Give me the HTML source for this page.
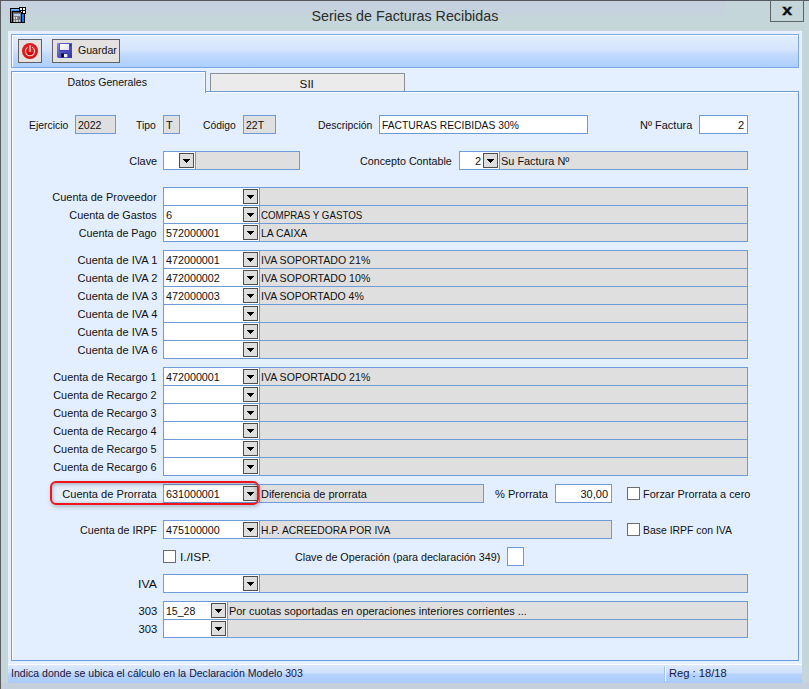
<!DOCTYPE html>
<html lang="es"><head><meta charset="utf-8"><title>Series de Facturas Recibidas</title>
<style>
html,body{margin:0;padding:0}
body{width:809px;height:689px;overflow:hidden;position:relative;background:#c4d5da;font-family:"Liberation Sans",sans-serif;font-size:11px;color:#101010}
div{box-sizing:border-box;position:absolute}
.t{white-space:nowrap;display:inline-block;transform-origin:0 0}
.r .t{transform-origin:100% 0}
.c .t{transform-origin:50% 0}
.frame{left:0;top:0;width:809px;height:689px;border-left:1px solid #5a5d62;border-top:1px solid #55585e;background:#c4d6d9}
.tbl{left:1px;top:1px;width:724px;height:17px;background:linear-gradient(#c6d0df 0,#c5d2dd 12px,#c4d6d9 17px)}
.title{left:0;top:0;width:809px;height:30px;line-height:31px;text-align:center;font-size:15px;color:#2b2b2b}
.close{left:770px;top:0;width:34px;height:22px;border:1px solid #5e6265;text-align:center;font-weight:bold;font-size:15px;line-height:17px;color:#0c0c0c;-webkit-text-stroke:0.4px #0c0c0c}
.close span{display:inline-block;transform:scaleX(1.18)}
.client{left:8px;top:30px;width:794px;height:653px;background:#e4efff;border-top:1px solid #d0d4d8}
.tool{left:11px;top:34px;width:788px;height:34px;border:1px solid #7da7e0;box-shadow:inset 1px 1px 0 #fff;background:linear-gradient(#e3eefe 0,#d5e5fd 46%,#c3dbfc 58%,#adcefb 100%)}
.btn{top:39px;height:24px;border:1px solid #626060;background:#e4e2e1}
.tabs{left:11px;top:91px;width:788px;height:570px;border:1px solid #6e9bd8;box-shadow:inset 1px 1px 0 #fff;background:#e3efff}
.tab1{left:11px;top:71px;width:195px;height:22px;border:1px solid #6e9bd8;border-bottom:none;box-shadow:inset 1px 1px 0 #fff,inset -1px 0 0 #f4f8fe;background:#e3efff;text-align:center;line-height:20px;padding-right:3px}
.tab2{left:210px;top:73px;width:195px;height:18px;border:1px solid #8b9097;border-bottom:none;background:#ebebeb;text-align:center;line-height:21px;padding-right:2px}
.status{left:8px;top:664px;width:794px;height:19px;border-top:1px solid #fbfdff;background:linear-gradient(#dde9fd 0,#cde0fc 8px,#b7d3fb 9px,#a9cbfa 100%);color:#15153c;line-height:17px}
.sep{left:656px;top:1px;width:2px;height:15px;border-left:1px solid #a3c3ef;background:#fff}
.bot{left:1px;top:683px;width:808px;height:6px;background:#c5d0dc}
.lb{height:19px;line-height:19px;white-space:nowrap}
.lb.r{text-align:right}
.bx{border:1px solid #6e9bd8;line-height:19px;padding-left:2px;white-space:nowrap;overflow:hidden}
.bx.in{background:#fff}
.bx.ro{background:#dfdfdf;padding-left:1px}
.bx.num{text-align:right;padding-right:3px;padding-left:0}
.n2{position:absolute;font-weight:normal;right:18px;top:0}
.dd{width:15px;height:15px;border:1px solid #4e4e4e;background:#dedede}
.dd i{position:absolute;left:3px;top:5px;width:7px;height:4px;background:linear-gradient(#000,#000) 0 0/7px 1px no-repeat,linear-gradient(#000,#000) 1px 1px/5px 1px no-repeat,linear-gradient(#000,#000) 2px 2px/3px 1px no-repeat,linear-gradient(#000,#000) 3px 3px/1px 1px no-repeat}
.ck{width:13px;height:13px;border:1px solid #6c6c6c;background:#fff}
.hl{border:2px solid #f0141c;border-radius:6px;box-shadow:inset 0 1px 4px rgba(0,0,0,.32),1px 2px 4px rgba(0,0,0,.22)}
</style></head><body>
<div class="frame"></div>
<div class="tbl"></div>
<svg style="position:absolute;left:10px;top:7px" width="16" height="16" viewBox="0 0 16 16" shape-rendering="crispEdges">
<rect x="0" y="1" width="15" height="15" fill="#000"/>
<rect x="9" y="0" width="7" height="7" fill="#000"/>
<rect x="1" y="2" width="8" height="2" fill="#7db8f5"/>
<rect x="1" y="3" width="8" height="1" fill="#3f95f0"/>
<rect x="1" y="4" width="1" height="11" fill="#1c82f4"/>
<rect x="12" y="7" width="2" height="8" fill="#0a7cff"/>
<rect x="2" y="4" width="1" height="11" fill="#000"/>
<rect x="3" y="5" width="8" height="10" fill="#7c7f86"/>
<rect x="3" y="5" width="8" height="1" fill="#4a4c52"/>
<rect x="4" y="7" width="6" height="2" fill="#b5d3ee"/>
<rect x="4" y="10" width="1" height="2" fill="#e4e4e4"/><rect x="6" y="10" width="1" height="2" fill="#e4e4e4"/><rect x="9" y="10" width="1" height="2" fill="#e23030"/>
<rect x="4" y="13" width="1" height="2" fill="#d0d0d0"/><rect x="6" y="13" width="2" height="2" fill="#d0d0d0"/><rect x="9" y="13" width="1" height="2" fill="#c8c8c8"/>
<rect x="10" y="1" width="2" height="2" fill="#fff"/><rect x="13" y="1" width="2" height="2" fill="#fff"/>
<rect x="11" y="4" width="1" height="1" fill="#fff"/><rect x="13" y="4" width="2" height="2" fill="#fff"/>
</svg>
<div class="title c"><span class="t" style="transform:scaleX(0.9534)">Series de Facturas Recibidas</span></div>
<div class="close"><span>x</span></div>
<div class="client"></div>
<div class="tool"></div>
<div class="btn" style="left:18px;width:24px"><svg style="position:absolute;left:3px;top:3px" width="16" height="16" viewBox="0 0 16 16">
<defs><radialGradient id="pg" cx="0.5" cy="0.45" r="0.55"><stop offset="0" stop-color="#e62020"/><stop offset="0.7" stop-color="#df1c1c"/><stop offset="1" stop-color="#c41616"/></radialGradient></defs>
<circle cx="8" cy="8" r="8" fill="url(#pg)"/>
<path d="M4 9.2 A4 4 0 0 0 12 9.2 Z" fill="#cc0808"/>
<path d="M6 4.1 A4.6 4.6 0 1 0 10 4.1" fill="none" stroke="#f7d4d4" stroke-width="1.05"/>
<rect x="7.2" y="2.2" width="1.6" height="6.8" fill="#e9c0c0"/>
</svg></div>
<div class="btn" style="left:52px;width:68px"><svg style="position:absolute;left:4px;top:3px" width="15" height="15" viewBox="0 0 15 15">
<defs><linearGradient id="fg" x1="0" y1="0" x2="1" y2="1"><stop offset="0" stop-color="#8a8ae6"/><stop offset="0.5" stop-color="#5555c8"/><stop offset="1" stop-color="#3232a0"/></linearGradient>
<linearGradient id="fl" x1="0" y1="0" x2="1" y2="1"><stop offset="0" stop-color="#fff"/><stop offset="1" stop-color="#dfe2f2"/></linearGradient></defs>
<path d="M0 0H15V15H1.2L0 13.8Z" fill="url(#fg)"/>
<rect x="2.5" y="0.5" width="10" height="8" fill="#4444b8"/>
<rect x="3" y="1" width="9" height="6" fill="url(#fl)"/>
<rect x="13" y="1.6" width="1.2" height="1.6" fill="#1c1c70"/>
<rect x="4" y="10.2" width="7" height="4.2" fill="#2c2c78"/>
<rect x="4.4" y="10.6" width="2.4" height="3.6" fill="#0c0c1c"/>
<rect x="7" y="11" width="3.4" height="3.2" fill="#eeeef6"/>
</svg><div style="left:25px;top:-1px;line-height:22px"><span class="t" style="transform:scaleX(0.9614)">Guardar</span></div></div>
<div class="tabs"></div>
<div class="tab1 c"><span class="t" style="transform:scaleX(0.9607)">Datos Generales</span></div>
<div class="tab2 c"><span class="t" style="transform:scaleX(1.0630)">SII</span></div>
<div class="lb r" style="left:-43px;top:188px;width:200px"><span class="t" style="transform:scaleX(0.9973)">Cuenta de Proveedor</span></div>
<div class="bx in" style="left:163px;top:187px;width:97px;height:19px;"></div>
<div class="dd" style="left:243px;top:189px"><i></i></div>
<div class="bx ro" style="left:259px;top:187px;width:489px;height:19px;"></div>
<div class="lb r" style="left:-43px;top:206px;width:200px"><span class="t" style="transform:scaleX(0.9845)">Cuenta de Gastos</span></div>
<div class="bx in" style="left:163px;top:205px;width:97px;height:19px;"><span class="t">6</span></div>
<div class="dd" style="left:243px;top:207px"><i></i></div>
<div class="bx ro" style="left:259px;top:205px;width:489px;height:19px;"><span class="t" style="transform:scaleX(0.8860)">COMPRAS Y GASTOS</span></div>
<div class="lb r" style="left:-43px;top:224px;width:200px"><span class="t" style="transform:scaleX(0.9784)">Cuenta de Pago</span></div>
<div class="bx in" style="left:163px;top:223px;width:97px;height:19px;"><span class="t" style="transform:scaleX(0.9771)">572000001</span></div>
<div class="dd" style="left:243px;top:225px"><i></i></div>
<div class="bx ro" style="left:259px;top:223px;width:489px;height:19px;"><span class="t" style="transform:scaleX(0.9464)">LA CAIXA</span></div>
<div class="lb r" style="left:-43px;top:251px;width:200px"><span class="t" style="transform:scaleX(1.0061)">Cuenta de IVA 1</span></div>
<div class="bx in" style="left:163px;top:250px;width:97px;height:19px;"><span class="t" style="transform:scaleX(0.9771)">472000001</span></div>
<div class="dd" style="left:243px;top:252px"><i></i></div>
<div class="bx ro" style="left:259px;top:250px;width:489px;height:19px;"><span class="t" style="transform:scaleX(0.9611)">IVA SOPORTADO 21%</span></div>
<div class="lb r" style="left:-43px;top:269px;width:200px"><span class="t" style="transform:scaleX(1.0061)">Cuenta de IVA 2</span></div>
<div class="bx in" style="left:163px;top:268px;width:97px;height:19px;"><span class="t" style="transform:scaleX(0.9771)">472000002</span></div>
<div class="dd" style="left:243px;top:270px"><i></i></div>
<div class="bx ro" style="left:259px;top:268px;width:489px;height:19px;"><span class="t" style="transform:scaleX(0.9611)">IVA SOPORTADO 10%</span></div>
<div class="lb r" style="left:-43px;top:287px;width:200px"><span class="t" style="transform:scaleX(1.0061)">Cuenta de IVA 3</span></div>
<div class="bx in" style="left:163px;top:286px;width:97px;height:19px;"><span class="t" style="transform:scaleX(0.9771)">472000003</span></div>
<div class="dd" style="left:243px;top:288px"><i></i></div>
<div class="bx ro" style="left:259px;top:286px;width:489px;height:19px;"><span class="t" style="transform:scaleX(0.9554)">IVA SOPORTADO 4%</span></div>
<div class="lb r" style="left:-43px;top:305px;width:200px"><span class="t" style="transform:scaleX(1.0061)">Cuenta de IVA 4</span></div>
<div class="bx in" style="left:163px;top:304px;width:97px;height:19px;"></div>
<div class="dd" style="left:243px;top:306px"><i></i></div>
<div class="bx ro" style="left:259px;top:304px;width:489px;height:19px;"></div>
<div class="lb r" style="left:-43px;top:323px;width:200px"><span class="t" style="transform:scaleX(1.0061)">Cuenta de IVA 5</span></div>
<div class="bx in" style="left:163px;top:322px;width:97px;height:19px;"></div>
<div class="dd" style="left:243px;top:324px"><i></i></div>
<div class="bx ro" style="left:259px;top:322px;width:489px;height:19px;"></div>
<div class="lb r" style="left:-43px;top:341px;width:200px"><span class="t" style="transform:scaleX(1.0061)">Cuenta de IVA 6</span></div>
<div class="bx in" style="left:163px;top:340px;width:97px;height:19px;"></div>
<div class="dd" style="left:243px;top:342px"><i></i></div>
<div class="bx ro" style="left:259px;top:340px;width:489px;height:19px;"></div>
<div class="lb r" style="left:-43px;top:368px;width:200px"><span class="t" style="transform:scaleX(0.9878)">Cuenta de Recargo 1</span></div>
<div class="bx in" style="left:163px;top:367px;width:97px;height:19px;"><span class="t" style="transform:scaleX(0.9771)">472000001</span></div>
<div class="dd" style="left:243px;top:369px"><i></i></div>
<div class="bx ro" style="left:259px;top:367px;width:489px;height:19px;"><span class="t" style="transform:scaleX(0.9611)">IVA SOPORTADO 21%</span></div>
<div class="lb r" style="left:-43px;top:386px;width:200px"><span class="t" style="transform:scaleX(0.9878)">Cuenta de Recargo 2</span></div>
<div class="bx in" style="left:163px;top:385px;width:97px;height:19px;"></div>
<div class="dd" style="left:243px;top:387px"><i></i></div>
<div class="bx ro" style="left:259px;top:385px;width:489px;height:19px;"></div>
<div class="lb r" style="left:-43px;top:404px;width:200px"><span class="t" style="transform:scaleX(0.9878)">Cuenta de Recargo 3</span></div>
<div class="bx in" style="left:163px;top:403px;width:97px;height:19px;"></div>
<div class="dd" style="left:243px;top:405px"><i></i></div>
<div class="bx ro" style="left:259px;top:403px;width:489px;height:19px;"></div>
<div class="lb r" style="left:-43px;top:422px;width:200px"><span class="t" style="transform:scaleX(0.9878)">Cuenta de Recargo 4</span></div>
<div class="bx in" style="left:163px;top:421px;width:97px;height:19px;"></div>
<div class="dd" style="left:243px;top:423px"><i></i></div>
<div class="bx ro" style="left:259px;top:421px;width:489px;height:19px;"></div>
<div class="lb r" style="left:-43px;top:440px;width:200px"><span class="t" style="transform:scaleX(0.9878)">Cuenta de Recargo 5</span></div>
<div class="bx in" style="left:163px;top:439px;width:97px;height:19px;"></div>
<div class="dd" style="left:243px;top:441px"><i></i></div>
<div class="bx ro" style="left:259px;top:439px;width:489px;height:19px;"></div>
<div class="lb r" style="left:-43px;top:458px;width:200px"><span class="t" style="transform:scaleX(0.9878)">Cuenta de Recargo 6</span></div>
<div class="bx in" style="left:163px;top:457px;width:97px;height:19px;"></div>
<div class="dd" style="left:243px;top:459px"><i></i></div>
<div class="bx ro" style="left:259px;top:457px;width:489px;height:19px;"></div>
<div class="lb" style="left:29px;top:116px"><span class="t" style="transform:scaleX(0.9452)">Ejercicio</span></div>
<div class="bx ro" style="left:75px;top:115px;width:41px;height:19px;padding-left:2px"><span class="t" style="transform:scaleX(0.9598)">2022</span></div>
<div class="lb" style="left:136px;top:116px"><span class="t" style="transform:scaleX(0.9429)">Tipo</span></div>
<div class="bx ro" style="left:163px;top:115px;width:17px;height:19px;padding-left:2px"><span class="t">T</span></div>
<div class="lb" style="left:203px;top:116px"><span class="t" style="transform:scaleX(0.9409)">Código</span></div>
<div class="bx ro" style="left:243px;top:115px;width:33px;height:19px;padding-left:2px"><span class="t" style="transform:scaleX(0.9542)">22T</span></div>
<div class="lb" style="left:318px;top:116px"><span class="t" style="transform:scaleX(0.9466)">Descripción</span></div>
<div class="bx in" style="left:379px;top:115px;width:209px;height:19px;"><span class="t" style="transform:scaleX(0.9364)">FACTURAS RECIBIDAS 30%</span></div>
<div class="lb" style="left:640px;top:116px"><span class="t" style="transform:scaleX(0.9998)">Nº Factura</span></div>
<div class="bx in num" style="left:699px;top:115px;width:49px;height:19px;"><span class="t">2</span></div>
<div class="lb r" style="left:-43px;top:152px;width:200px"><span class="t" style="transform:scaleX(0.9884)">Clave</span></div>
<div class="bx ro" style="left:163px;top:151px;width:137px;height:19px;"></div>
<div class="bx in" style="left:163px;top:151px;width:33px;height:19px;"></div>
<div class="dd" style="left:179px;top:153px"><i></i></div>
<div class="lb" style="left:360px;top:152px"><span class="t" style="transform:scaleX(0.9747)">Concepto Contable</span></div>
<div class="bx ro" style="left:459px;top:151px;width:289px;height:19px;"></div>
<div class="bx in" style="left:459px;top:151px;width:41px;height:19px;"><span class="t"><b class="n2">2</b></span></div>
<div class="dd" style="left:483px;top:153px"><i></i></div>
<div class="lb" style="left:501px;top:152px"><span class="t" style="transform:scaleX(0.9923)">Su Factura Nº</span></div>
<div class="lb r" style="left:-43px;top:485px;width:200px"><span class="t" style="transform:scaleX(1.0079)">Cuenta de Prorrata</span></div>
<div class="bx in" style="left:163px;top:484px;width:97px;height:19px;"><span class="t" style="transform:scaleX(0.9771)">631000001</span></div>
<div class="dd" style="left:243px;top:486px"><i></i></div>
<div class="bx ro" style="left:259px;top:484px;width:225px;height:19px;"><span class="t" style="transform:scaleX(0.9944)">Diferencia de prorrata</span></div>
<div class="lb" style="left:495px;top:485px"><span class="t" style="transform:scaleX(1.0080)">% Prorrata</span></div>
<div class="bx in num" style="left:555px;top:484px;width:57px;height:19px;"><span class="t">30,00</span></div>
<div class="ck" style="left:627px;top:487px"></div>
<div class="lb" style="left:643px;top:485px"><span class="t" style="transform:scaleX(0.9926)">Forzar Prorrata a cero</span></div>
<div class="hl" style="left:50px;top:481px;width:209px;height:24px"></div>
<div class="lb r" style="left:-43px;top:521px;width:200px"><span class="t" style="transform:scaleX(0.9737)">Cuenta de IRPF</span></div>
<div class="bx in" style="left:163px;top:520px;width:97px;height:19px;"><span class="t" style="transform:scaleX(0.9771)">475100000</span></div>
<div class="dd" style="left:243px;top:522px"><i></i></div>
<div class="bx ro" style="left:259px;top:520px;width:353px;height:19px;"><span class="t" style="transform:scaleX(0.9345)">H.P. ACREEDORA POR IVA</span></div>
<div class="ck" style="left:627px;top:523px"></div>
<div class="lb" style="left:643px;top:521px"><span class="t" style="transform:scaleX(0.9473)">Base IRPF con IVA</span></div>
<div class="ck" style="left:163px;top:550px"></div>
<div class="lb" style="left:180px;top:548px"><span class="t" style="transform:scaleX(1.0929)">I./ISP.</span></div>
<div class="lb" style="left:295px;top:548px"><span class="t" style="transform:scaleX(0.9760)">Clave de Operación (para declaración 349)</span></div>
<div class="bx in" style="left:507px;top:547px;width:17px;height:19px;"></div>
<div class="lb r" style="left:-43px;top:575px;width:200px"><span class="t" style="transform:scaleX(1.1110)">IVA</span></div>
<div class="bx in" style="left:163px;top:574px;width:97px;height:19px;"></div>
<div class="dd" style="left:243px;top:576px"><i></i></div>
<div class="bx ro" style="left:259px;top:574px;width:489px;height:19px;"></div>
<div class="lb r" style="left:-43px;top:602px;width:200px"><span class="t" style="transform:scaleX(1.0240)">303</span></div>
<div class="bx in" style="left:163px;top:601px;width:65px;height:19px;"><span class="t" style="transform:scaleX(0.9577)">15_28</span></div>
<div class="dd" style="left:211px;top:603px"><i></i></div>
<div class="bx ro" style="left:227px;top:601px;width:521px;height:19px;"><span class="t" style="transform:scaleX(0.9919)">Por cuotas soportadas en operaciones interiores corrientes ...</span></div>
<div class="lb r" style="left:-43px;top:620px;width:200px"><span class="t" style="transform:scaleX(1.0240)">303</span></div>
<div class="bx in" style="left:163px;top:619px;width:65px;height:19px;"></div>
<div class="dd" style="left:211px;top:621px"><i></i></div>
<div class="bx ro" style="left:227px;top:619px;width:521px;height:19px;"></div>
<div class="bot"></div>
<div class="status"><div class="sep"></div><div style="left:3px;top:0"><span class="t" style="transform:scaleX(0.9582)">Indica donde se ubica el cálculo en la Declaración Modelo 303</span></div><div style="left:661px;top:0"><span class="t" style="transform:scaleX(1.0163)">Reg : 18/18</span></div></div>
</body></html>
